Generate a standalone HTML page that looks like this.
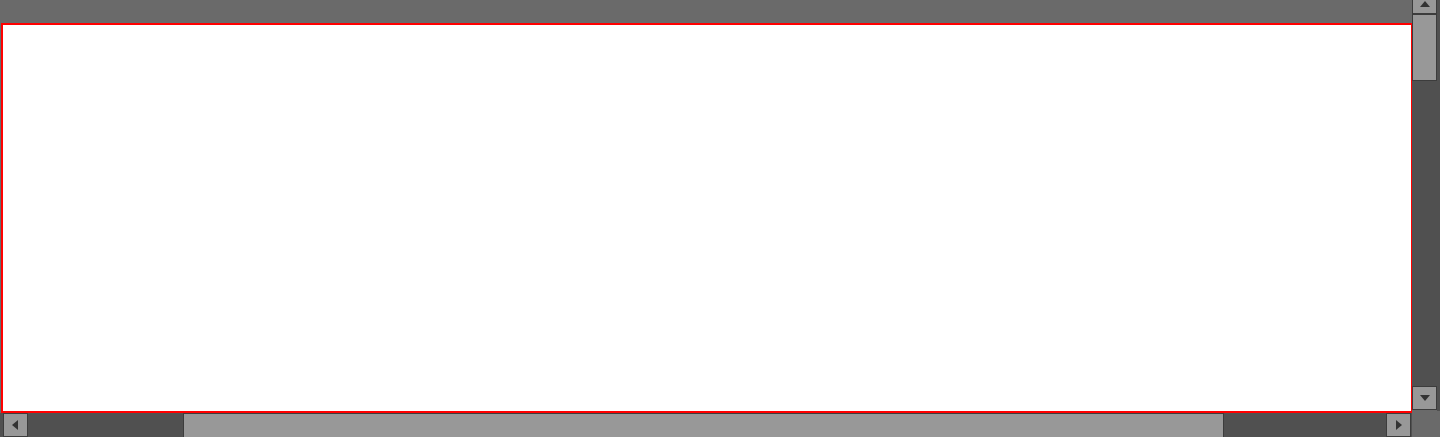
<!DOCTYPE html><html><head><style>
body{margin:0;width:1440px;height:437px;background:#6a6a6a;position:relative;overflow:hidden}
div{position:absolute;box-sizing:border-box}
.btn{background:#989898;border:1px solid #3c3c3c}
.tri{width:0;height:0;position:absolute}
</style></head><body>
<div style="left:0;top:0;width:1412px;height:23px;background:#6a6a6a"></div>
<div style="left:1;top:23px;left:1px;width:1412px;height:390px;background:#fff;border:2px solid #f00"></div>
<div style="left:1412px;top:0;width:28px;height:411px;background:#505050"></div>
<div class="btn" style="left:1412px;top:-1px;width:25px;height:15px"><div class="tri" style="left:7px;top:1px;border-left:5px solid transparent;border-right:5px solid transparent;border-bottom:6px solid #333"></div></div>
<div class="btn" style="left:1412px;top:14px;width:25px;height:67px;border-top-color:#3c3c3c"></div>
<div class="btn" style="left:1412px;top:386px;width:25px;height:24px"><div class="tri" style="left:7px;top:8px;border-left:5px solid transparent;border-right:5px solid transparent;border-top:6px solid #333"></div></div>
<div style="left:0;top:413px;width:1412px;height:24px;background:#505050"></div>
<div class="btn" style="left:3px;top:413px;width:25px;height:24px"><div class="tri" style="left:8px;top:6px;border-top:5px solid transparent;border-bottom:5px solid transparent;border-right:6px solid #333"></div></div>
<div class="btn" style="left:183px;top:413px;width:1041px;height:24px;border-bottom:none"></div>
<div class="btn" style="left:1386px;top:413px;width:25px;height:24px"><div class="tri" style="left:9px;top:6px;border-top:5px solid transparent;border-bottom:5px solid transparent;border-left:6px solid #333"></div></div>
<div style="left:1412px;top:410px;width:25px;height:27px;background:#6a6a6a"></div>
</body></html>
